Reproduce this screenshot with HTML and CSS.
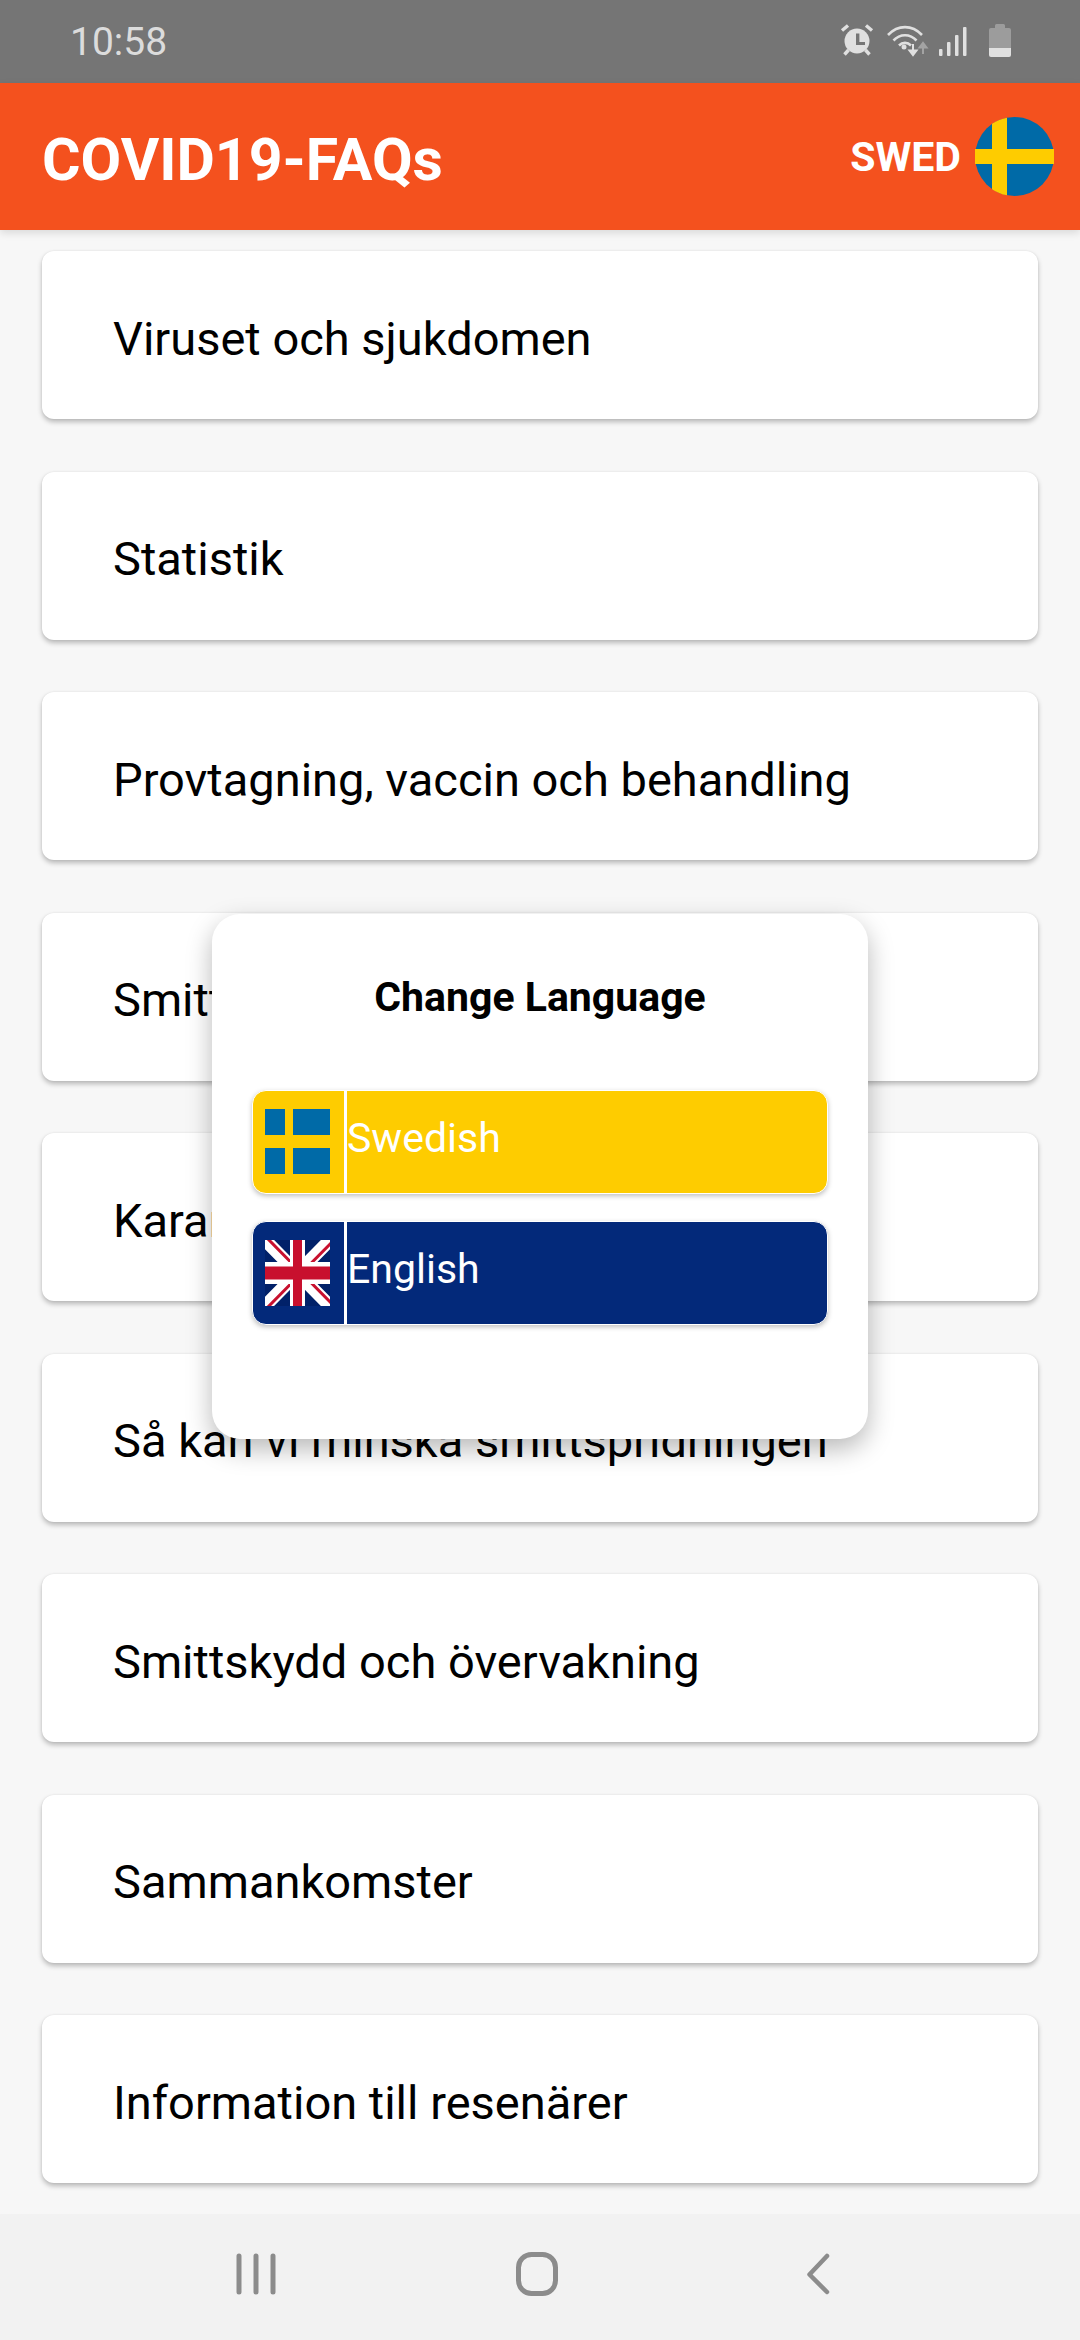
FILE: index.html
```html
<!DOCTYPE html>
<html lang="sv">
<head>
<meta charset="utf-8">
<title>COVID19-FAQs</title>
<link rel="stylesheet" href="styles.css">
</head>
<body>
<div class="app">
  <div class="status">
    <span class="time">10:58</span>
    <div class="status-icons">
      <svg class="ic-alarm" width="34" height="34" viewBox="0 0 34 34">
        <circle cx="17" cy="18" r="12.5" fill="#e0e0e0"/>
        <path d="M16 10.500h3.400v8.600h5.600v3h-9z" fill="#757575"/>
        <path d="M2 7.500 8 2.500M32 7.500 26 2.500" stroke="#e0e0e0" stroke-width="3.400" fill="none"/>
        <path d="M8.500 27 4.500 31.500M25.500 27l4 4.500" stroke="#e0e0e0" stroke-width="3.400" fill="none"/>
      </svg>
      <svg class="ic-wifi" width="44" height="34" viewBox="0 0 44 34">
        <path d="M2 12C12 1.500 26 1.500 36 12M7.500 17.500C14 10.500 24 10.500 30.500 17.500M13 22.500C16.500 19 21.500 19 25 22.500" stroke="#e0e0e0" stroke-width="2.600" fill="none"/>
        <circle cx="18" cy="24" r="2.500" fill="#e0e0e0"/>
        <path d="M27 21v7M23.500 27.500h7L27 32z" stroke="#e0e0e0" stroke-width="2" fill="#e0e0e0"/>
        <path d="M37 31v-7M33.500 24.500h7L37 20z" stroke="#a3a3a3" stroke-width="2" fill="#a3a3a3"/>
      </svg>
      <svg class="ic-signal" width="28" height="30" viewBox="0 0 28 30">
        <rect x="0" y="22" width="3.500" height="7" rx="1" fill="#e0e0e0"/>
        <rect x="8" y="15" width="3.500" height="14" rx="1" fill="#e0e0e0"/>
        <rect x="16" y="8" width="3.500" height="21" rx="1" fill="#e0e0e0"/>
        <rect x="24" y="0" width="3.500" height="29" rx="1" fill="#e0e0e0"/>
      </svg>
      <svg class="ic-battery" width="22" height="33" viewBox="0 0 22 33">
        <path d="M6 4V1.500Q6 0 7.500 0h7Q16 0 16 1.500V4h4Q22 4 22 6v18H0V6Q0 4 2 4z" fill="#9c9c9c"/>
        <path d="M0 24h22v7q0 2-2 2H2q-2 0-2-2z" fill="#e0e0e0"/>
      </svg>
    </div>
  </div>

  <header class="topbar">
    <h1 class="title">COVID19-FAQs</h1>
    <div class="lang">
      <span class="lang-code">SWED</span>
      <svg class="lang-flag" width="79" height="79" viewBox="0 0 79 79">
        <circle cx="39.500" cy="39.500" r="39.500" fill="#006aa7"/>
        <path d="M17 6.800A39.500 39.500 0 0 1 32 .7V78.300A39.500 39.500 0 0 1 17 72.200V47H0V32h17z" fill="#fecc00"/>
        <path d="M32 32h47v15H32z" fill="#fecc00"/>
      </svg>
    </div>
  </header>

  <main class="list">
    <div class="card">Viruset och sjukdomen</div>
    <div class="card">Statistik</div>
    <div class="card">Provtagning, vaccin och behandling</div>
    <div class="card">Smittspridning</div>
    <div class="card">Karantän</div>
    <div class="card">Så kan vi minska smittspridningen</div>
    <div class="card">Smittskydd och övervakning</div>
    <div class="card">Sammankomster</div>
    <div class="card">Information till resenärer</div>
  </main>

  <nav class="navbar">
    <svg class="nav-recent" width="40" height="44" viewBox="0 0 40 44">
      <path d="M3 4v36M20 4v36M37 4v36" stroke="#8c8c8c" stroke-width="5" stroke-linecap="round" fill="none"/>
    </svg>
    <svg class="nav-home" width="42" height="44" viewBox="0 0 42 44">
      <rect x="2.500" y="2.500" width="37" height="39" rx="13" stroke="#8c8c8c" stroke-width="5" fill="none"/>
    </svg>
    <svg class="nav-back" width="24" height="44" viewBox="0 0 24 44">
      <path d="M21 4 3.500 22.500 21 40" stroke="#8c8c8c" stroke-width="4.500" stroke-linecap="round" stroke-linejoin="round" fill="none"/>
    </svg>
  </nav>

  <div class="modal">
    <h2 class="modal-title">Change Language</h2>
    <button class="lang-btn lang-sv">
      <span class="flag-cell">
        <svg width="65" height="65" viewBox="0 0 65 65">
          <rect x="0" y="0" width="20" height="26" fill="#006aa7"/>
          <rect x="28" y="0" width="37" height="26" fill="#006aa7"/>
          <rect x="0" y="39" width="20" height="26" fill="#006aa7"/>
          <rect x="28" y="39" width="37" height="26" fill="#006aa7"/>
        </svg>
      </span>
      <span class="lang-label">Swedish</span>
    </button>
    <button class="lang-btn lang-en">
      <span class="flag-cell">
        <svg width="65" height="66" viewBox="0 0 65 66">
          <rect width="65" height="66" fill="#012169"/>
          <path d="M0 0 65 66M65 0 0 66" stroke="#fff" stroke-width="13"/>
          <path d="M0 0 32.500 33M65 66 32.500 33" stroke="#c8102e" stroke-width="3" transform="translate(2 -2)"/>
          <path d="M65 0 32.500 33M0 66 32.500 33" stroke="#c8102e" stroke-width="3" transform="translate(2 2)"/>
          <path d="M32.500 0v66" stroke="#fff" stroke-width="15"/>
          <path d="M0 33h65" stroke="#fff" stroke-width="22"/>
          <path d="M32.500 0v66" stroke="#c8102e" stroke-width="9"/>
          <path d="M0 33h65" stroke="#c8102e" stroke-width="13"/>
        </svg>
      </span>
      <span class="lang-label">English</span>
    </button>
  </div>
</div>
</body>
</html>
```

FILE: styles.css
```css
* { box-sizing: border-box; }
html, body { margin: 0; padding: 0; }
body { font-family: Roboto, "Liberation Sans", sans-serif; background: #f7f7f7; }

.app {
  position: relative;
  width: 1080px;
  height: 2340px;
  display: flex;
  flex-direction: column;
  overflow: hidden;
  background: #f7f7f7;
}

.status {
  height: 83px;
  flex: none;
  background: #757575;
  display: flex;
  align-items: center;
  justify-content: space-between;
  padding: 0 69px 0 70px;
}
.time { font-size: 39px; color: #dcdcdc; line-height: 1; margin-top: 1px; }
.status-icons { display: flex; align-items: center; gap: 12px; margin-top: -3px; }
.ic-signal { margin-left: -3px; margin-top: 4px; }
.ic-battery { margin-left: 10px; }

.topbar {
  height: 147px;
  flex: none;
  background: #f4511e;
  display: flex;
  align-items: center;
  justify-content: space-between;
  padding: 0 26px 0 42px;
  position: relative;
  z-index: 1;
  box-shadow: 0 3px 8px rgba(0, 0, 0, 0.12);
}
.title { margin: 0; font-size: 59px; font-weight: 700; color: #fff; line-height: 1; margin-top: 5px; }
.lang { display: flex; align-items: center; gap: 14px; }
.lang-code { font-size: 41px; font-weight: 700; color: #fff; line-height: 1; margin-top: 1px; }

.list {
  flex: 1;
  display: flex;
  flex-direction: column;
  gap: 52.500px;
  padding: 21px 42px 0;
  overflow: hidden;
}
.card {
  flex: none;
  height: 168px;
  background: #fff;
  border-radius: 12px;
  padding: 6px 71px 0;
  display: flex;
  align-items: center;
  font-size: 47px;
  color: #000;
  box-shadow: 0 3px 5px rgba(0, 0, 0, 0.25), 0 0 2px rgba(0, 0, 0, 0.08);
}

.navbar {
  height: 126px;
  flex: none;
  background: #f2f2f2;
  position: relative;
  z-index: 1;
  display: flex;
  align-items: center;
  padding: 0 0 0 236px;
}
.nav-recent { margin-top: -6px; }
.nav-home { margin-left: 240px; margin-top: -6px; }
.nav-back { margin-left: 248px; margin-top: -6px; }

.modal {
  position: absolute;
  left: 212px;
  top: 914px;
  width: 656px;
  height: 525px;
  z-index: 2;
  background: #fff;
  border-radius: 28px;
  padding: 60px 40px 0;
  display: flex;
  flex-direction: column;
  box-shadow: 0 10px 26px rgba(0, 0, 0, 0.28);
}
.modal-title {
  margin: 0 0 70px;
  font-size: 41px;
  font-weight: 700;
  line-height: 46px;
  text-align: center;
  color: #000;
}
.lang-btn {
  height: 104px;
  flex: none;
  width: 100%;
  margin-bottom: 27px;
  padding: 0;
  display: flex;
  align-items: stretch;
  border: 1.500px solid #fff;
  border-radius: 14px;
  font-family: inherit;
  color: #fff;
  box-shadow: 0 2px 5px rgba(0, 0, 0, 0.25);
}
.lang-sv { background: #fecc00; }
.lang-en { background: #03297a; }
.flag-cell {
  flex: none;
  width: 94px;
  border-right: 3px solid #fff;
  padding: 18px 0 0 12px;
  display: block;
}
.flag-cell svg { display: block; }
.lang-label {
  font-size: 41px;
  line-height: 1;
  padding: 27px 0 0 0;
}
```
